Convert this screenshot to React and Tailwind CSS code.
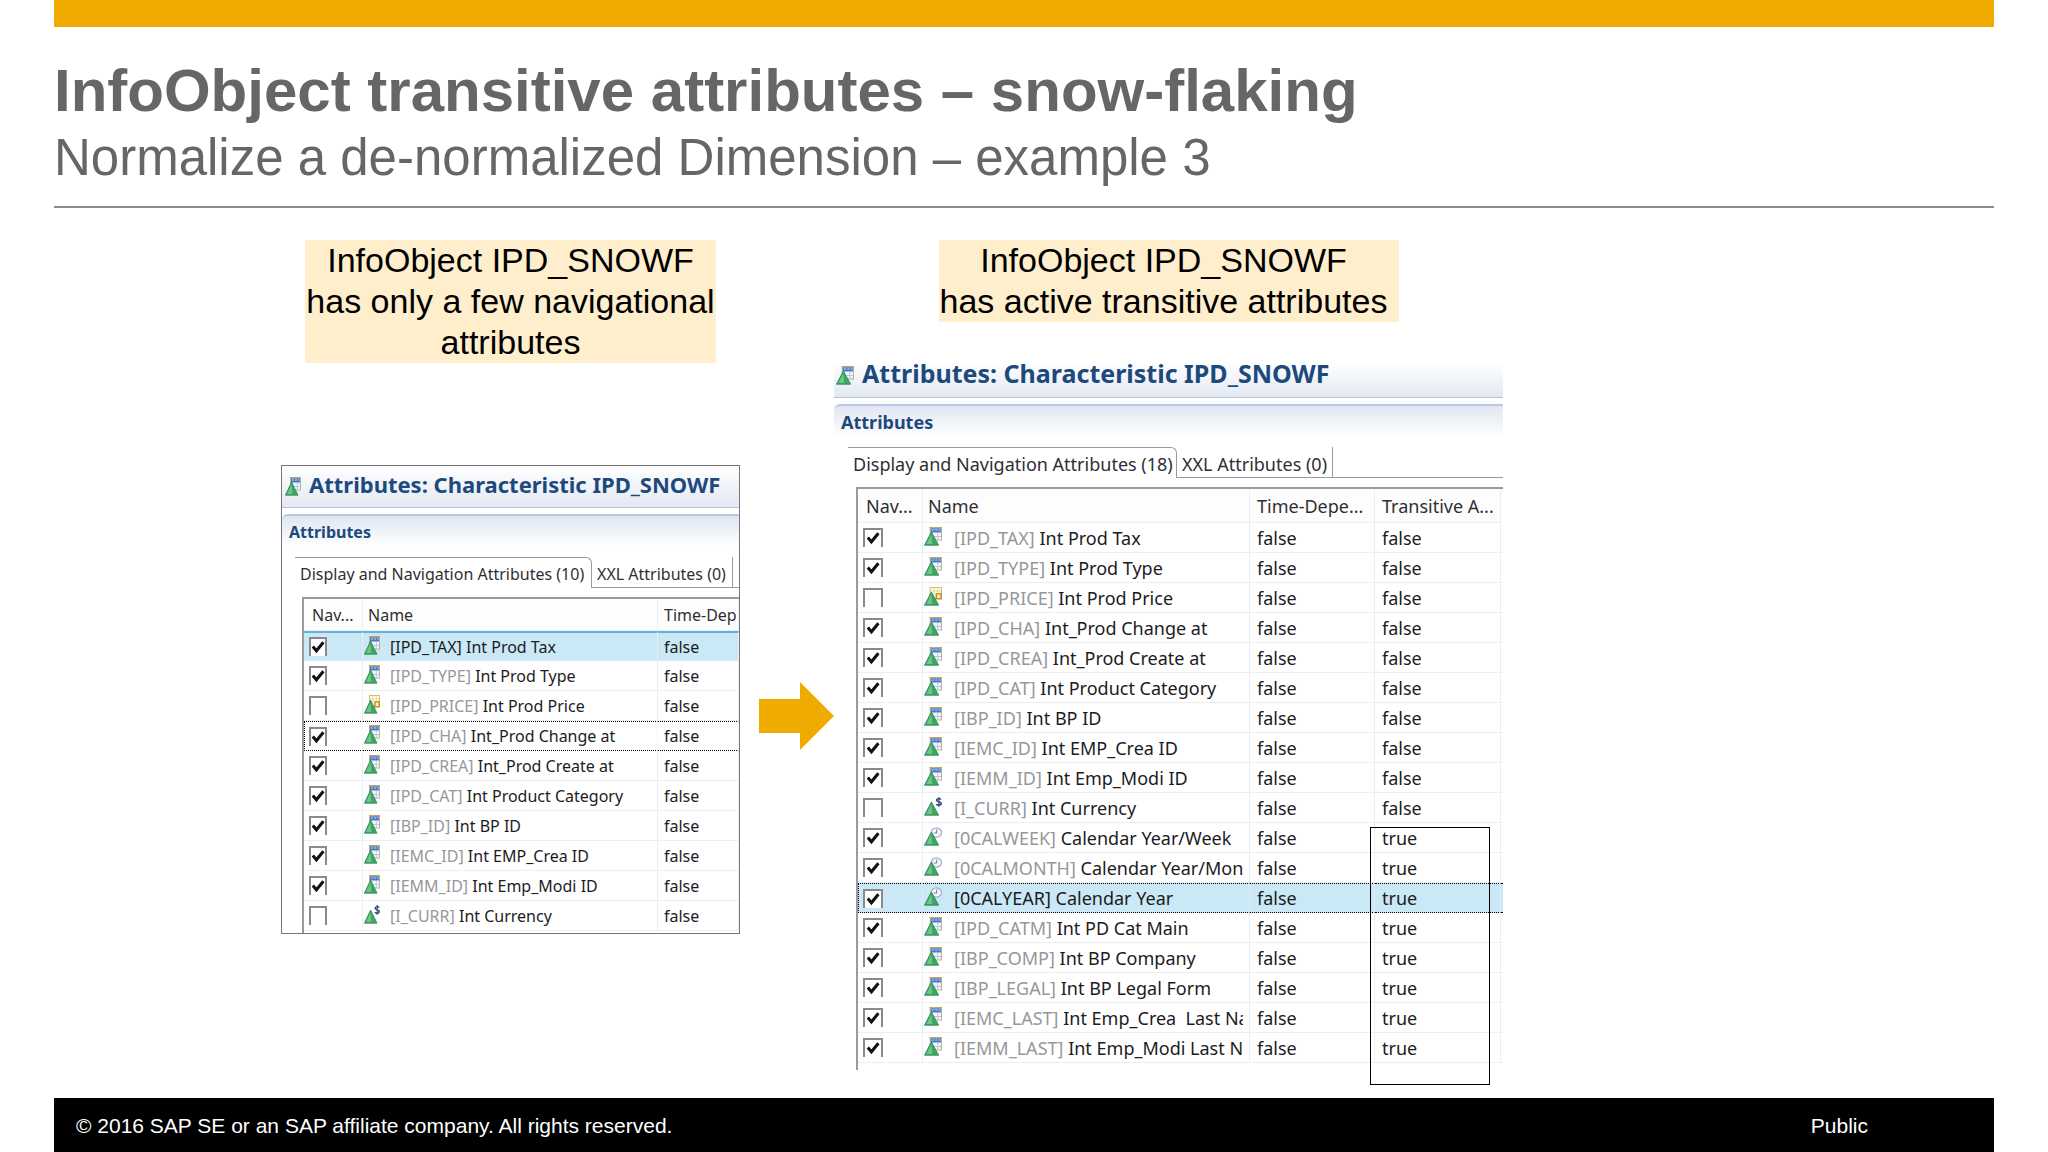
const leftRows = [
  { id: "IPD_TAX", text: "Int Prod Tax", checked: true, icon: "table", selected: true },
  { id: "IPD_TYPE", text: "Int Prod Type", checked: true, icon: "table" },
  { id: "IPD_PRICE", text: "Int Prod Price", checked: false, icon: "key" },
  { id: "IPD_CHA", text: "Int_Prod Change at", checked: true, icon: "table", focused: true },
  { id: "IPD_CREA", text: "Int_Prod Create at", checked: true, icon: "table" },
  { id: "IPD_CAT", text: "Int Product Category", checked: true, icon: "table" },
  { id: "IBP_ID", text: "Int BP ID", checked: true, icon: "table" },
  { id: "IEMC_ID", text: "Int EMP_Crea ID", checked: true, icon: "table" },
  { id: "IEMM_ID", text: "Int Emp_Modi ID", checked: true, icon: "table" },
  { id: "I_CURR", text: "Int Currency", checked: false, icon: "currency" },
];

const rightRows = [
  ...leftRows.map((row) => ({ ...row, selected: false, focused: false, transitive: "false" })),
  { id: "0CALWEEK", text: "Calendar Year/Week", checked: true, icon: "time", transitive: "true" },
  { id: "0CALMONTH", text: "Calendar Year/Month", checked: true, icon: "time", transitive: "true" },
  {
    id: "0CALYEAR",
    text: "Calendar Year",
    checked: true,
    icon: "time",
    transitive: "true",
    selected: true,
    focused: true,
  },
  { id: "IPD_CATM", text: "Int PD Cat Main", checked: true, icon: "table", transitive: "true" },
  { id: "IBP_COMP", text: "Int BP Company", checked: true, icon: "table", transitive: "true" },
  { id: "IBP_LEGAL", text: "Int BP Legal Form", checked: true, icon: "table", transitive: "true" },
  { id: "IEMC_LAST", text: "Int Emp_Crea  Last Name", checked: true, icon: "table", transitive: "true" },
  { id: "IEMM_LAST", text: "Int Emp_Modi Last Name", checked: true, icon: "table", transitive: "true" },
];

function ObjectIcon({ type, className }) {
  return (
    <svg viewBox="0 0 16 19" preserveAspectRatio="none" className={className}>
      {type === "table" && (
        <g>
          <rect x="5.5" y="0.5" width="10" height="12.5" fill="#f4f7fd" stroke="#b9b48e" />
          <rect x="5" y="0" width="11" height="1.3" fill="#b9a763" />
          <rect x="6" y="1.3" width="9" height="4.2" fill="#4a78c4" />
          <path d="M7 3h2M10 3h2M13 3h1.5" stroke="#c5daf7" strokeWidth="1.2" />
          <path d="M12.3 5.5v7.5M9 9.5h6.5" stroke="#a9bde0" strokeWidth="0.8" />
        </g>
      )}
      {type === "key" && (
        <g>
          <rect x="5.5" y="0.5" width="10" height="11" fill="#fffdf0" stroke="#d6bd6a" />
          <path d="M5.5 4h10M9 0.5v7M12.3 0.5v5" stroke="#e3cf8f" strokeWidth="0.8" />
          <rect x="11" y="6.8" width="4.2" height="5" fill="#fff3c4" stroke="#cf8a1c" strokeWidth="1.4" />
        </g>
      )}
      {type === "currency" && (
        <g fill="none" stroke="#30517c">
          <path d="M15 2.6C14.4 1.6 11.2 1.3 11.2 3.3C11.2 5.2 15.2 4.4 15.2 6.6C15.2 8.6 11.6 8.4 11 7.2" strokeWidth="1.6" />
          <path d="M13.2 0v10" strokeWidth="1" />
        </g>
      )}
      {type === "time" && (
        <g>
          <circle cx="11" cy="5.5" r="4.6" fill="#f5f8fd" stroke="#a3aec6" strokeWidth="1.1" />
          <path d="M11.3 2.6v3.4H8.6" fill="none" stroke="#7486ad" strokeWidth="1" />
        </g>
      )}
      <path d="M6.6 5L13 18.2H0.4Z" fill="#3fa564" stroke="#2c8a52" strokeWidth="0.8" />
      <path d="M6.4 7.5L7.4 17H2.2Z" fill="#6cc487" />
    </svg>
  );
}

function NavCheckbox({ row, wide }) {
  return (
    <span className={`relative block ${wide ? "w-5 h-[19px]" : "w-[18px] h-[19px]"}`}>
      <input
        type="checkbox"
        aria-label={row.id}
        defaultChecked={row.checked}
        className="peer appearance-none block w-full h-full bg-white border-2 border-b-0 border-[#8a8a8c]"
      />
      <svg
        viewBox="0 0 18 19"
        className="absolute inset-0 w-full h-full pointer-events-none opacity-0 peer-checked:opacity-100"
      >
        <path d="M3.8 9.6L7.4 13.8L14.4 5.2" fill="none" stroke="#111113" strokeWidth="3" />
      </svg>
    </span>
  );
}

function cellStyle(row, first) {
  if (row.focused) {
    return `border-y border-dotted border-y-black ${first ? "border-l border-l-black" : ""}`;
  }
  if (row.selected) {
    return "border-t-2 border-t-[#5fb2dc] border-b border-b-[#d5ecf7]";
  }
  return "border-b border-b-[#ededf2]";
}

function AttributeTable({ rows, wide }) {
  const headCell = "p-0 font-normal text-left border-r border-r-[#ededf2] border-b border-b-[#ededf2]";
  const pad = wide ? "pl-[7px]" : "pl-[6px]";
  return (
    <table className="w-full table-fixed border-separate border-spacing-0 text-[#1c1c1e] whitespace-pre">
      <colgroup>
        <col className={wide ? "w-[65px]" : "w-[59px]"} />
        <col className={wide ? "w-[327px]" : "w-[295px]"} />
        <col className={wide ? "w-[125px]" : ""} />
        {wide && <col className="w-[126px]" />}
        {wide && <col />}
      </colgroup>
      <thead>
        <tr className={`text-[#2f2f33] bg-[#fdfdfe] ${wide ? "h-[34px]" : "h-8"}`}>
          <th className={`${headCell} pl-2`}>Nav...</th>
          <th className={`${headCell} pl-[5px]`}>Name</th>
          <th className={`${headCell} ${pad}`}>{wide ? "Time-Depe..." : "Time-Dep"}</th>
          {wide && <th className={`${headCell} ${pad}`}>Transitive A...</th>}
          {wide && <th className="p-0" />}
        </tr>
      </thead>
      <tbody>
        {rows.map((row) => (
          <tr key={row.id} className={`h-[30px] ${row.selected ? "bg-[#cbe8f6]" : ""}`}>
            <td
              className={`p-0 border-r border-r-[#ededf2] ${row.focused ? "pl-1" : "pl-[5px]"} ${cellStyle(row, true)}`}
            >
              <NavCheckbox row={row} wide={wide} />
            </td>
            <td className={`p-0 border-r border-r-[#ededf2] ${cellStyle(row)}`}>
              <div className="flex items-center overflow-hidden mr-[6px] pl-px leading-6">
                <ObjectIcon
                  type={row.icon}
                  className={`shrink-0 mb-[3px] ${wide ? "w-[18px] h-[19px] mr-3" : "w-4 h-[19px] mr-[10px]"}`}
                />
                <span className={row.selected ? "" : "text-[#97979b]"}>[{row.id}]</span>
                <span> {row.text}</span>
              </div>
            </td>
            <td className={`p-0 border-r border-r-[#ededf2] ${pad} ${cellStyle(row)}`}>false</td>
            {wide && (
              <td className={`p-0 border-r border-r-[#ededf2] ${pad} ${cellStyle(row)}`}>{row.transitive}</td>
            )}
            {wide && <td className={`p-0 ${cellStyle(row)}`} />}
          </tr>
        ))}
      </tbody>
    </table>
  );
}

function AttributePanel({ rows, count, wide }) {
  return (
    <div
      className={`overflow-hidden bg-white font-['Noto_Sans','Open_Sans',sans-serif] ${
        wide ? "text-[18px] leading-6" : "text-[16px] leading-6"
      }`}
    >
      <div
        className={`flex items-start border-b border-[#b4c3dc] bg-linear-to-b from-white to-[#e3e8f3] ${
          wide ? "h-9 pl-[2px]" : "h-[42px] pt-1 pl-[3px]"
        }`}
      >
        <ObjectIcon
          type="table"
          className={`shrink-0 ${wide ? "w-[18px] h-[19px] mt-1 mr-2" : "w-4 h-[19px] mt-[7px] mr-2"}`}
        />
        <h3
          className={`font-bold text-[#1d4a7c] whitespace-nowrap ${
            wide ? "text-[25px] leading-6 -mt-px" : "text-[22px] leading-7"
          }`}
        >
          Attributes: Characteristic IPD_SNOWF
        </h3>
      </div>
      <div className="mt-[6px] h-[43px] pt-1 pl-[7px] rounded-tl-md border-t-2 border-[#b9c8e0] bg-linear-to-b from-[#e0e6f1] to-white to-75%">
        <h4 className="font-bold text-[#1d4a7c]">Attributes</h4>
      </div>
      <div className={`flex h-[31px] ${wide ? "pl-[14px]" : "pl-[13px]"}`} role="tablist">
        <button
          role="tab"
          aria-selected="true"
          className={`border-t border-r border-[#9b9b9f] rounded-tr-md text-left pt-[2px] pl-[5px] whitespace-nowrap text-[#2f2f33] ${
            wide ? "w-[329px]" : "w-[297px]"
          }`}
        >
          Display and Navigation Attributes ({count})
        </button>
        <button
          role="tab"
          aria-selected="false"
          className={`border-r border-b border-[#9b9b9f] text-left pt-1 pl-[5px] whitespace-nowrap text-[#2f2f33] ${
            wide ? "w-[156px]" : "w-[141px]"
          }`}
        >
          XXL Attributes (0)
        </button>
        <div className="grow border-b border-[#9b9b9f]" />
      </div>
      <div
        className={`mt-[9px] border-l-2 border-t-2 border-[#9b9b9f] ${
          wide ? "ml-[22px] pb-[7px]" : "ml-[20px] pb-[2px]"
        }`}
      >
        <AttributeTable rows={rows} wide={wide} />
      </div>
    </div>
  );
}

function App() {
  return (
    <div className="min-h-screen flex flex-col bg-white font-['Liberation_Sans',Arial,sans-serif] px-[54px]">
      <div className="h-[27px] bg-[#efab00]" />
      <header className="pt-[30px] pb-[15px] border-b-2 border-[#8c8c8c] text-[#666666]">
        <h1 className="text-[60px] leading-[68px] font-bold">InfoObject transitive attributes – snow-flaking</h1>
        <h2 className="text-[51px] leading-[66px]">Normalize a de-normalized Dimension – example 3</h2>
      </header>

      <main className="flex items-start pt-8 pl-[227px]">
        <section className="flex flex-col items-center w-[459px]">
          <p className="w-[411px] bg-[#ffeecc] text-center text-black text-[34px] leading-[41px] whitespace-nowrap">
            InfoObject IPD_SNOWF
            <br />
            has only a few navigational
            <br />
            attributes
          </p>
          <div className="w-full mt-[102px] border border-[#77777b]">
            <AttributePanel rows={leftRows} count={10} />
          </div>
        </section>

        <svg viewBox="0 0 75 68" className="w-[75px] h-[68px] ml-[19px] mt-[442px] shrink-0">
          <path d="M0 17H41V0L75 34L41 68V51H0Z" fill="#efab00" />
        </svg>

        <section className="flex flex-col items-center w-[669px]">
          <p className="w-[460px] pr-[10px] bg-[#ffeecc] text-center text-black text-[34px] leading-[41px] whitespace-nowrap">
            InfoObject IPD_SNOWF
            <br />
            has active transitive attributes
          </p>
          <div className="relative w-full mt-10">
            <AttributePanel rows={rightRows} count={18} wide />
            {/* frame around the transitive values */}
            <div className="absolute right-[13px] bottom-[-15px] w-[120px] h-[258px] border border-black" />
          </div>
        </section>
      </main>

      <footer className="mt-auto h-[54px] pt-[2px] flex items-center justify-between pl-[22px] pr-[126px] bg-black text-white text-[21px]">
        <span>© 2016 SAP SE or an SAP affiliate company. All rights reserved.</span>
        <span>Public</span>
      </footer>
    </div>
  );
}

export default App;
